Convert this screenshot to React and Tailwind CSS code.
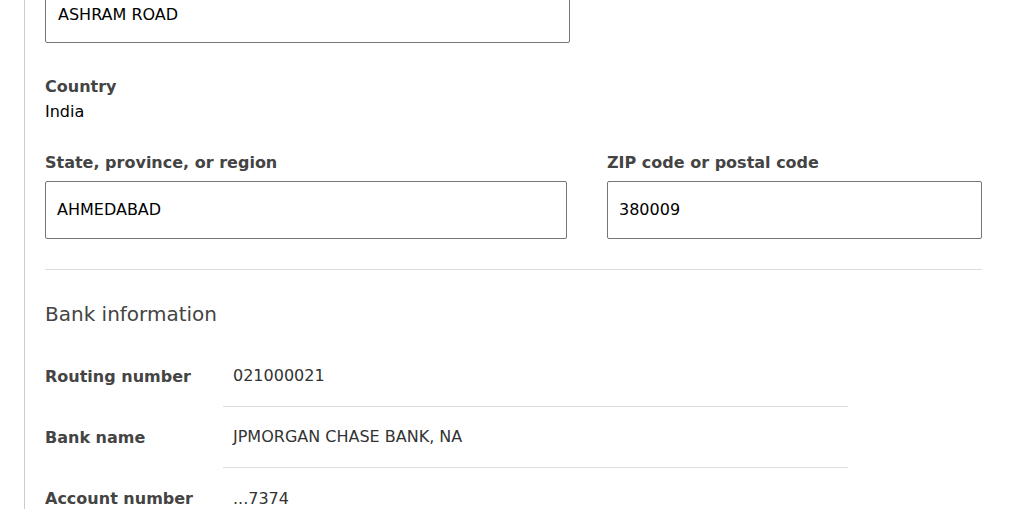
import React from "react";

const font = { fontFamily: '"DejaVu Sans", Verdana, sans-serif' };

function Field({ label, value, className = "" }) {
  return (
    <div className={className}>
      <div className="text-[16px] font-bold text-[#444] leading-5 mb-[8px]">{label}</div>
      <div className="h-[58px] border border-[#767676] rounded-[2px] flex items-center px-[11px] text-[16px] text-black">
        {value}
      </div>
    </div>
  );
}

function BankRow({ label, value, last }) {
  return (
    <div className="flex">
      <div className="w-[178px] h-[61px] flex items-center text-[16px] font-bold text-[#444]">{label}</div>
      <div
        className={`w-[625px] h-[61px] flex items-center pl-[10px] text-[16px] text-[#333] ${
          last ? "" : "border-b border-[#ddd]"
        }`}
      >
        {value}
      </div>
    </div>
  );
}

export default function App() {
  return (
    <div className="w-[1016px] h-[524px] overflow-hidden bg-white" style={font}>
      <div className="ml-[24px] border-l border-[#ccc] pl-[20px] w-[958px] h-full">
        <div className="-mt-[15px] w-[525px] h-[58px] border border-[#767676] rounded-[2px] flex items-center pt-[2px] px-[12px] text-[16px] text-black">
          ASHRAM ROAD
        </div>

        <div className="mt-[34px]">
          <div className="text-[16px] font-bold text-[#444] leading-5">Country</div>
          <div className="text-[16px] text-black leading-5 mt-[5px]">India</div>
        </div>

        <div className="mt-[31px] flex gap-[40px]">
          <Field label="State, province, or region" value="AHMEDABAD" className="w-[522px]" />
          <Field label="ZIP code or postal code" value="380009" className="w-[375px]" />
        </div>

        <div className="mt-[30px] border-t border-[#ddd]" />

        <div className="mt-[30px] text-[20px] text-[#444] leading-7">Bank information</div>

        <div className="mt-[18px]">
          <BankRow label="Routing number" value="021000021" />
          <BankRow label="Bank name" value="JPMORGAN CHASE BANK, NA" />
          <BankRow label="Account number" value="...7374" last />
        </div>
      </div>
    </div>
  );
}
